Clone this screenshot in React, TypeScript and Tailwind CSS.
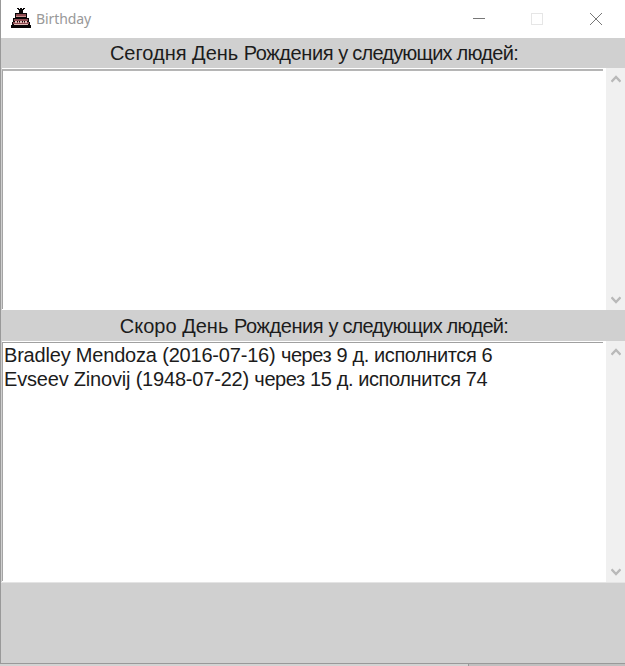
const upcoming = [
  { person: 'Bradley Mendoza (2016-07-16) ', note: 'через 9 д. исполнится 6' },
  { person: 'Evseev Zinovij (1948-07-22) ', note: 'через 15 д. исполнится 74' },
];

function CakeIcon() {
  return (
    <svg width="20" height="20" viewBox="0 0 20 20" shapeRendering="crispEdges" className="mb-0.5 -ml-px mr-px shrink-0">
      <path fill="#080506" d="M6 0h2v1H6zM9 0h2v2H9zM12 0h2v1h-2zM7 1h6v1H7zM8 2h4v3H8zM4 5h12v5H4zM2 10h16v6H2zM1 14h18v4H1zM0 17h20v3H0z" />
      <path fill="#8c4a50" d="M5 6h10v2H5zM3 11h14v2H3zM2 14h16v2H2z" />
      <path fill="#c98f8c" d="M5 8h10v1H5z" />
      <path fill="#e2bdb8" d="M4 13h2v2H4zM7 13h1v2H7zM9 13h2v2H9zM12 13h1v2h-1zM14 13h2v2h-2zM3 16h14v1H3z" />
    </svg>
  );
}

function Chevron({ down = false }: { down?: boolean }) {
  return (
    <svg width="10" height="8" viewBox="0 0 10 8" className={down ? 'rotate-180' : ''}>
      <path d="M.5 6.7 5 2 9.5 6.7" fill="none" stroke="#b9b9b9" strokeWidth="2.4" />
    </svg>
  );
}

function Heading({ lead }: { lead: string }) {
  return (
    <h2 className="flex h-full items-center justify-center whitespace-pre bg-[#d0d0d0] pl-0.5 text-[20px] leading-6">
      <span>{lead} День </span>
      <span className="tracking-[-0.4px]">Рождения </span>
      <span className="tracking-[-0.8px]">у следующих </span>
      <span className="tracking-[-0.7px]">людей:</span>
    </h2>
  );
}

function ListPane({ items, thick = false }: { items: { person: string; note: string }[]; thick?: boolean }) {
  return (
    <div className="flex h-full bg-white">
      <ul className={`mb-px mr-[3px] mt-px flex-1 border-l border-l-[#a4a4a4] pl-px text-[20px] leading-6 ${thick ? 'border-t-2 border-t-[#b5b5b5]' : 'border-t border-t-[#a0a0a0]'}`}>
        {items.map((item) => (
          <li key={item.person} className="h-6 whitespace-pre">
            <span className="tracking-[-0.19px]">{item.person}</span>
            <span className="tracking-[-0.4px]">{item.note}</span>
          </li>
        ))}
      </ul>
      <div className="flex w-[19px] flex-col items-center justify-between bg-[#f0f0f0] pb-1.5 pt-[7px]">
        <Chevron />
        <Chevron down />
      </div>
    </div>
  );
}

export default function App() {
  return (
    <div className="flex h-[666px] w-[625px] flex-col overflow-hidden bg-[#d0d0d0] font-['Liberation_Sans',Arial,sans-serif] text-[#1c1c1c]">
      <div className="flex h-[664px] flex-col border-b border-l border-[#999]">
        <header className="flex h-[38px] shrink-0 items-center bg-white pl-[11px]">
          <CakeIcon />
          <span className="mb-px ml-1 flex-1 font-['Noto_Sans',sans-serif] text-[14px] tracking-[-0.1px] text-[#999]">Birthday</span>
          <svg width="152" height="38" viewBox="0 0 152 38" fill="none" shapeRendering="crispEdges">
            <path d="M0 18.5h12" stroke="#777" />
            <path d="M58.5 13.5h11v11h-11z" stroke="#e6e6e6" />
            <path d="m117 13 12 12m0-12-12 12" stroke="#777" shapeRendering="auto" />
          </svg>
        </header>
        <div className="h-[30px] shrink-0"><Heading lead="Сегодня" /></div>
        <div className="h-[242px] shrink-0 pl-px"><ListPane items={[]} thick /></div>
        <div className="h-[31px] shrink-0"><Heading lead="Скоро" /></div>
        <div className="h-[241px] shrink-0 pl-px"><ListPane items={upcoming} /></div>
        <footer className="flex-1 border-t border-[#e4e4e4] bg-[#d0d0d0]" />
      </div>
      <div className="flex h-[2px]">
        <div className="w-[469px] border-r border-[#999] bg-[#d3d3d3]" />
        <div className="flex-1 bg-[#c0c0c0]" />
      </div>
    </div>
  );
}
